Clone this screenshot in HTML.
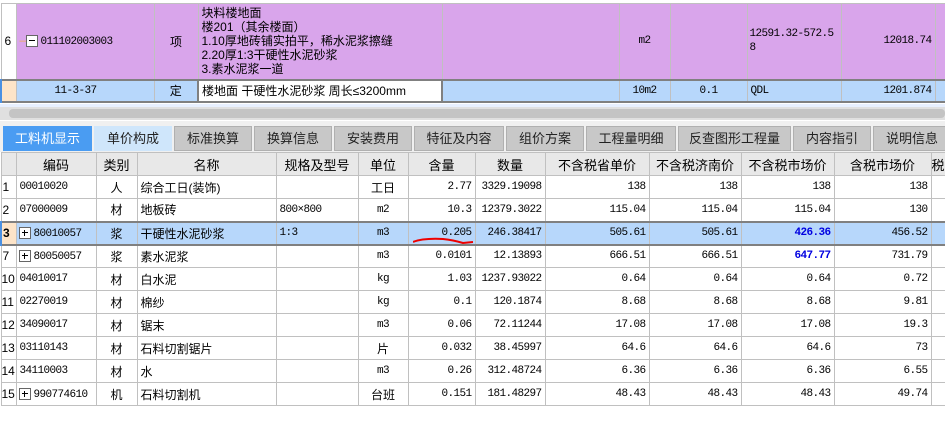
<!DOCTYPE html>
<html><head><meta charset="utf-8"><style>
*{margin:0;padding:0;box-sizing:border-box}
body{width:945px;height:439px;overflow:hidden;background:#fff;font-family:"Liberation Sans","Noto Sans CJK SC",sans-serif;font-size:12px;color:#000;position:relative}
table{border-collapse:collapse;table-layout:fixed;position:absolute;left:0}
td{border:1px solid #c0c0c0;white-space:nowrap;overflow:hidden;padding:0 3px;font-size:12px}
.m{font-family:"Liberation Mono","Noto Sans CJK SC",monospace;font-size:11px;letter-spacing:-0.6px}
.r{text-align:right}.c{text-align:center}
.pu td{background:#d9a5eb}
.bl td{background:#b7d7fb}
.box{display:inline-block;width:12px;height:12px;border:1px solid #666;background:#fff;vertical-align:middle;position:relative;margin-right:3px}
.box:before{content:"";position:absolute;left:2px;right:2px;top:4px;height:1px;background:#000}
.plus:after{content:"";position:absolute;top:2px;bottom:2px;left:4px;width:1px;background:#000}
.tabs{position:absolute;top:126px;left:0;height:25px;width:945px}
.tab{position:absolute;top:0;height:25px;background:#c8c8c8;border:1px solid #b0b0b0;font-size:13px;text-align:center;line-height:24px;color:#222}
th{background:#e8e8e8;font-weight:normal;border:1px solid #c0c0c0;font-size:13px;height:23px}
.bt td{height:23px}
.blue{color:#0000e0;font-weight:bold}
</style></head><body>
<table style="top:3px;width:960px">
<colgroup><col style="width:15px"><col style="width:138px"><col style="width:44px"><col style="width:244px"><col style="width:177px"><col style="width:51px"><col style="width:77px"><col style="width:94px"><col style="width:94px"><col style="width:26px"></colgroup>
<tr class="pu" style="height:76px"><td style="background:#fff">6</td><td class="m"><span style="color:#f0b050">—</span><span class="box"></span>011102003003</td><td class="c">项</td><td style="line-height:14px;white-space:normal;font-size:12px">块料楼地面<br>楼201（其余楼面）<br>1.10厚地砖铺实拍平，稀水泥浆擦缝<br>2.20厚1:3干硬性水泥砂浆<br>3.素水泥浆一道</td><td></td><td class="c m">m2</td><td></td><td class="m" style="white-space:normal;line-height:14px;padding:0 2px">12591.32-572.5<br>8</td><td class="r m">12018.74</td><td></td></tr>
<tr class="bl" style="height:22px;border-top:2px solid #808080;border-bottom:2px solid #808080"><td style="background:#fde4c8;border-left:2px solid #4a90e2"></td><td class="m" style="padding-left:38px">11-3-37</td><td class="c">定</td><td style="background:#fff;border:2px solid #808080">楼地面 干硬性水泥砂浆 周长≤3200mm</td><td></td><td class="c m">10m2</td><td class="c m">0.1</td><td class="m">QDL</td><td class="r m">1201.874</td><td></td></tr>
</table>
<div style="position:absolute;top:104px;left:0;width:945px;height:3px;background:#e8f0ff"></div>
<div style="position:absolute;top:107px;left:0;width:945px;height:13px;background:#e0e0e0"></div>
<div style="position:absolute;top:109px;left:9px;width:936px;height:9px;background:#c4c4c4;border-radius:4px"></div>
<div style="position:absolute;top:121px;left:0;width:945px;height:31px;background:#f0f0f0"></div>
<div class="tabs">
<div class="tab" style="left:3px;width:89px;background:#4a9cf2;color:#fff;border-color:#4a9cf2">工料机显示</div>
<div class="tab" style="left:94px;width:78px;background:#cfe6fb;border-color:#cfe6fb">单价构成</div>
<div class="tab" style="left:174px;width:78px">标准换算</div>
<div class="tab" style="left:254px;width:78px">换算信息</div>
<div class="tab" style="left:334px;width:78px">安装费用</div>
<div class="tab" style="left:414px;width:90px">特征及内容</div>
<div class="tab" style="left:506px;width:78px">组价方案</div>
<div class="tab" style="left:586px;width:90px">工程量明细</div>
<div class="tab" style="left:678px;width:113px">反查图形工程量</div>
<div class="tab" style="left:793px;width:78px">内容指引</div>
<div class="tab" style="left:873px;width:78px">说明信息</div>
</div>
<table style="top:152px;width:960px">
<colgroup><col style="width:15px"><col style="width:80px"><col style="width:41px"><col style="width:139px"><col style="width:82px"><col style="width:50px"><col style="width:67px"><col style="width:70px"><col style="width:104px"><col style="width:92px"><col style="width:93px"><col style="width:97px"><col style="width:30px"></colgroup>
<tr><th></th><th>编码</th><th>类别</th><th>名称</th><th>规格及型号</th><th>单位</th><th>含量</th><th>数量</th><th>不含税省单价</th><th>不含税济南价</th><th>不含税市场价</th><th>含税市场价</th><th style="text-align:left">税</th></tr>
<tbody class="bt">
<tr><td style="padding:0 1px">1</td><td class="m">00010020</td><td class="c">人</td><td>综合工日(装饰)</td><td></td><td class="c">工日</td><td class="r m">2.77</td><td class="r m">3329.19098</td><td class="r m">138</td><td class="r m">138</td><td class="r m">138</td><td class="r m">138</td><td></td></tr>
<tr><td style="padding:0 1px">2</td><td class="m">07000009</td><td class="c">材</td><td>地板砖</td><td class="m">800×800</td><td class="c m">m2</td><td class="r m">10.3</td><td class="r m">12379.3022</td><td class="r m">115.04</td><td class="r m">115.04</td><td class="r m">115.04</td><td class="r m">130</td><td></td></tr>
<tr class="bl" style="border-top:2px solid #808080;border-bottom:2px solid #808080"><td style="padding:0 1px;background:#fde4c8;font-weight:bold;border-left:2px solid #4a90e2">3</td><td class="m" style="padding-left:2px"><span class="box plus"></span>80010057</td><td class="c">浆</td><td>干硬性水泥砂浆</td><td class="m">1:3</td><td class="c m">m3</td><td class="r m" style="position:relative">0.205<svg style="position:absolute;left:4px;top:14px" width="60" height="8"><path d="M0 5 Q10 1 30 2 Q40 3 50 6 L60 5" stroke="#e00" stroke-width="2" fill="none"/></svg></td><td class="r m">246.38417</td><td class="r m">505.61</td><td class="r m">505.61</td><td class="r m blue">426.36</td><td class="r m">456.52</td><td></td></tr>
<tr><td style="padding:0 1px">7</td><td class="m" style="padding-left:2px"><span class="box plus"></span>80050057</td><td class="c">浆</td><td>素水泥浆</td><td></td><td class="c m">m3</td><td class="r m">0.0101</td><td class="r m">12.13893</td><td class="r m">666.51</td><td class="r m">666.51</td><td class="r m blue">647.77</td><td class="r m">731.79</td><td></td></tr>
<tr><td style="padding:0">10</td><td class="m">04010017</td><td class="c">材</td><td>白水泥</td><td></td><td class="c m">kg</td><td class="r m">1.03</td><td class="r m">1237.93022</td><td class="r m">0.64</td><td class="r m">0.64</td><td class="r m">0.64</td><td class="r m">0.72</td><td></td></tr>
<tr><td style="padding:0">11</td><td class="m">02270019</td><td class="c">材</td><td>棉纱</td><td></td><td class="c m">kg</td><td class="r m">0.1</td><td class="r m">120.1874</td><td class="r m">8.68</td><td class="r m">8.68</td><td class="r m">8.68</td><td class="r m">9.81</td><td></td></tr>
<tr><td style="padding:0">12</td><td class="m">34090017</td><td class="c">材</td><td>锯末</td><td></td><td class="c m">m3</td><td class="r m">0.06</td><td class="r m">72.11244</td><td class="r m">17.08</td><td class="r m">17.08</td><td class="r m">17.08</td><td class="r m">19.3</td><td></td></tr>
<tr><td style="padding:0">13</td><td class="m">03110143</td><td class="c">材</td><td>石料切割锯片</td><td></td><td class="c">片</td><td class="r m">0.032</td><td class="r m">38.45997</td><td class="r m">64.6</td><td class="r m">64.6</td><td class="r m">64.6</td><td class="r m">73</td><td></td></tr>
<tr><td style="padding:0">14</td><td class="m">34110003</td><td class="c">材</td><td>水</td><td></td><td class="c m">m3</td><td class="r m">0.26</td><td class="r m">312.48724</td><td class="r m">6.36</td><td class="r m">6.36</td><td class="r m">6.36</td><td class="r m">6.55</td><td></td></tr>
<tr><td style="padding:0">15</td><td class="m" style="padding-left:2px"><span class="box plus"></span>990774610</td><td class="c">机</td><td>石料切割机</td><td></td><td class="c">台班</td><td class="r m">0.151</td><td class="r m">181.48297</td><td class="r m">48.43</td><td class="r m">48.43</td><td class="r m">48.43</td><td class="r m">49.74</td><td></td></tr>
</tbody></table>
</body></html>
